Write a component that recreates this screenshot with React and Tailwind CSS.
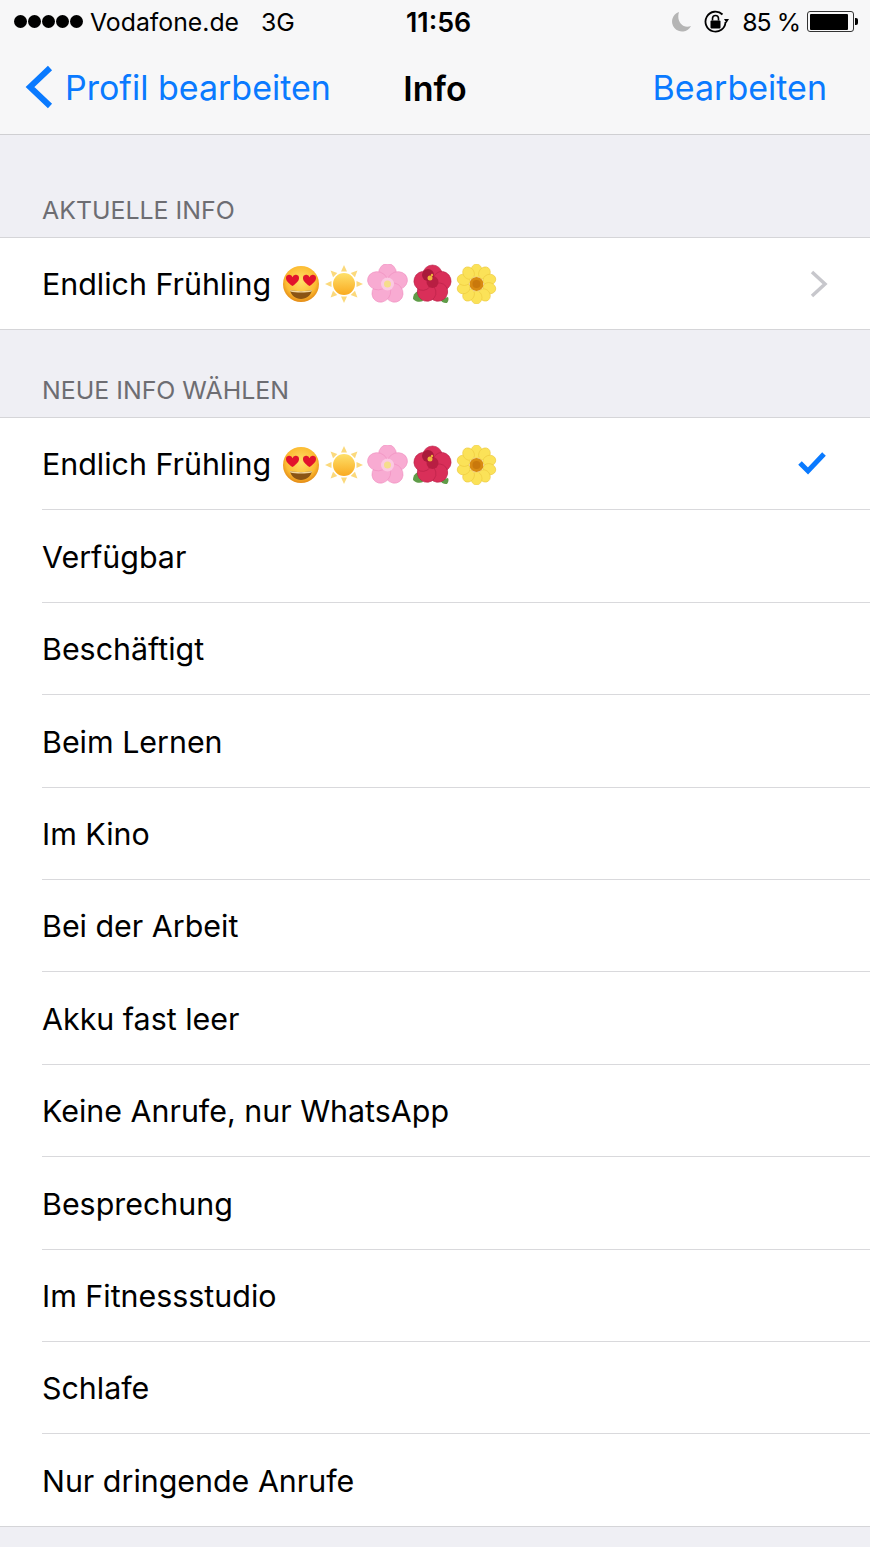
const font = "font-['Inter',sans-serif]";

const statusOptions = [
  'Verfügbar',
  'Beschäftigt',
  'Beim Lernen',
  'Im Kino',
  'Bei der Arbeit',
  'Akku fast leer',
  'Keine Anrufe, nur WhatsApp',
  'Besprechung',
  'Im Fitnessstudio',
  'Schlafe',
];

const Petals = ({ count, cx, cy, dist, rx, ry, fill, stroke }) => (
  <>
    {Array.from({ length: count }).map((_, i) => (
      <ellipse
        key={i}
        cx={cx}
        cy={cy - dist}
        rx={rx}
        ry={ry}
        fill={fill}
        stroke={stroke}
        strokeWidth={stroke ? 0.6 : 0}
        transform={`rotate(${(360 / count) * i} ${cx} ${cy})`}
      />
    ))}
  </>
);

const Heart = ({ x, y }) => (
  <path
    d="M6.500 11C2 7.800 0 5.500 0 3.200a3.300 3.300 0 0 1 6.500-1 3.300 3.300 0 0 1 6.500 1c0 2.300-2 4.600-6.500 7.800z"
    fill="#e2132c"
    transform={`translate(${x} ${y})`}
  />
);

const HeartEyes = () => (
  <svg width="38" height="38" viewBox="0 0 38 38">
    <defs>
      <radialGradient id="face" cx="50%" cy="42%" r="58%">
        <stop offset="0%" stopColor="#ffe06a" />
        <stop offset="72%" stopColor="#fcbc33" />
        <stop offset="100%" stopColor="#e48a14" />
      </radialGradient>
    </defs>
    <circle cx="19" cy="19" r="18" fill="url(#face)" />
    <Heart x={4} y={10} />
    <Heart x={21} y={10} />
    <path d="M8 25c5 1.500 17 1.500 22 0-1 5.500-5.500 9-11 9s-10-3.500-11-9z" fill="#8a5414" />
    <path d="M8 25c5 1.500 17 1.500 22 0l-.4 1.500c-5 1.300-16.200 1.300-21.200 0z" fill="#f3d9a0" />
  </svg>
);

const Sun = () => (
  <svg width="40" height="38" viewBox="0 0 40 38">
    <defs>
      <linearGradient id="sun" x1="0" y1="0" x2="0" y2="1">
        <stop offset="0%" stopColor="#fee06a" />
        <stop offset="100%" stopColor="#f9aa20" />
      </linearGradient>
    </defs>
    {[0, 45, 90, 135, 180, 225, 270, 315].map((a) => (
      <path key={a} d="M20 0l3 6.500h-6z" fill="#fbd97c" transform={`rotate(${a} 20 19)`} />
    ))}
    <circle cx="20" cy="19" r="11" fill="url(#sun)" />
  </svg>
);

const Blossom = () => (
  <svg width="41" height="40" viewBox="0 0 41 40">
    <Petals count={5} cx={20.500} cy={20} dist={10.500} rx={9} ry={10} fill="#f8abd2" stroke="#f08fc0" />
    <circle cx="20.500" cy="20" r="6.500" fill="#fbc9e2" />
    <circle cx="20.500" cy="20" r="3.500" fill="#f5dd8c" />
  </svg>
);

const Hibiscus = () => (
  <svg width="41" height="40" viewBox="0 0 41 40">
    <path d="M1 35c0-5 3-8 7-8l3 10c-3 1.500-7 1-10-2z" fill="#5f9c48" />
    <path d="M28 35l8-2c1 2 .5 4-1 6-3 .500-6-1-7-4z" fill="#5f9c48" />
    <Petals count={5} cx={20.500} cy={20} dist={10} rx={9.500} ry={9} fill="#d92f59" stroke="#b92148" />
    <circle cx="20.500" cy="18" r="6" fill="#b81e42" />
    <circle cx="16" cy="11" r="6" fill="#a91a3a" />
    <circle cx="18" cy="14" r="2.500" fill="#efb23c" />
    <circle cx="20" cy="11" r="1.200" fill="#efb23c" />
  </svg>
);

const YellowFlower = () => (
  <svg width="41" height="40" viewBox="0 0 41 40">
    <Petals count={10} cx={20.500} cy={20} dist={13.500} rx={5.500} ry={6.500} fill="#fbe258" stroke="#edc93c" />
    <circle cx="20.500" cy="20" r="7" fill="#d98a12" />
    <circle cx="20.500" cy="20" r="4" fill="#c9780c" />
  </svg>
);

const EmojiText = () => (
  <div className="flex items-center">
    <span>Endlich Frühling</span>
    <div className="ml-[11px] flex items-center gap-[3.500px]">
      <HeartEyes />
      <Sun />
      <Blossom />
      <Hibiscus />
      <YellowFlower />
    </div>
  </div>
);

const Row = ({ children, right }) => (
  <div className="h-[92.42px] pl-[42px] bg-white">
    <div className="h-full pt-[3px] flex items-center justify-between border-b border-[#d9d9dc]">
      {children}
      {right}
    </div>
  </div>
);

export default function App() {
  return (
    <div className={`w-[870px] h-[1547px] overflow-hidden bg-[#efeff4] text-[30.4px] text-black ${font}`}>
      {/* Status bar + nav */}
      <div className="h-[135px] bg-[#f7f7f8] border-b border-[#cfcfd2]">
        <div className="h-[44px] relative flex items-center justify-between pl-[14px] pr-[12px] text-[24.8px] leading-none">
          <div className="flex items-center">
            <div className="flex gap-[1px]">
              {[0, 1, 2, 3, 4].map((i) => (
                <div key={i} className="w-[13px] h-[13px] rounded-full bg-black" />
              ))}
            </div>
            <span className="ml-[7px]">Vodafone.de</span>
            <span className="ml-[22px]">3G</span>
          </div>
          <div className="absolute left-[406px] top-[9px] text-[26.800px] font-semibold">11:56</div>
          <div className="flex items-center">
            <svg width="20" height="20" viewBox="0 0 20 20">
              <path d="M8 0a10 10 0 1 0 12 14C12 17 5 10 8 0z" fill="#b5b5b5" />
            </svg>
            <svg className="ml-[13px]" width="26" height="24" viewBox="0 0 26 24" fill="none">
              <path d="M21.500 12a10 10 0 1 1-3-7.500" stroke="#000" strokeWidth="1.800" />
              <path d="M20 9l5 0-2.500 4z" fill="#000" />
              <rect x="6.500" y="10.500" width="10" height="8" rx="1" fill="#000" />
              <path d="M8.500 10.500V8.500a3 3 0 0 1 6 0v2" stroke="#000" strokeWidth="1.600" />
            </svg>
            <span className="ml-[12px] tracking-[-1px]">85 %</span>
            <div className="ml-[7px] w-[47px] h-[21px] rounded-[3px] border border-[#333] p-[1.500px] flex">
              <div className="w-[38px] h-full bg-black rounded-[1px]" />
            </div>
            <div className="ml-[1px] w-[3px] h-[7px] bg-black rounded-r-[2px]" />
          </div>
        </div>
        <div className="h-[90px] relative flex items-center justify-between pl-[25px] pr-[43px] pb-[4px] text-[#0a7aff] text-[34px]">
          <div className="flex items-center">
            <svg width="28" height="44" viewBox="0 0 28 44" fill="none">
              <path d="M25 3L5 22l20 19" stroke="#0a7aff" strokeWidth="6" />
            </svg>
            <span className="ml-[12px]">Profil bearbeiten</span>
          </div>
          <div className="absolute left-0 right-0 top-[19px] text-center text-black font-semibold">Info</div>
          <span>Bearbeiten</span>
        </div>
      </div>

      <div className="h-[103px] flex items-end pb-[12px] pl-[42px] text-[24.9px] leading-[30px] text-[#6d6d72] border-b border-[#d5d5d8]">
        AKTUELLE INFO
      </div>
      <div className="h-[92px] pt-[2px] pl-[42px] pr-[42px] bg-white flex items-center justify-between border-b border-[#d5d5d8]">
        <EmojiText />
        <svg className="mb-[2px]" width="18" height="30" viewBox="0 0 18 30" fill="none">
          <path d="M2 3l13 12L2 27" stroke="#c7c7cc" strokeWidth="3.500" />
        </svg>
      </div>

      <div className="h-[88px] flex items-end pb-[12px] pl-[42px] text-[24.9px] leading-[30px] text-[#6d6d72] border-b border-[#d5d5d8]">
        NEUE INFO WÄHLEN
      </div>

      <Row
        right={
          <svg className="mr-[44px] mb-[4px]" width="28" height="24" viewBox="0 0 28 24" fill="none">
            <path d="M2 12l8 8L26 3" stroke="#0a7aff" strokeWidth="5" />
          </svg>
        }
      >
        <EmojiText />
      </Row>
      {statusOptions.map((s) => (
        <Row key={s}>
          <span>{s}</span>
        </Row>
      ))}
      {/* last row's line runs the full width */}
      <div className="h-[93px] pt-[3px] pl-[42px] bg-white flex items-center border-b border-[#d5d5d8]">
        <span>Nur dringende Anrufe</span>
      </div>
    </div>
  );
}
